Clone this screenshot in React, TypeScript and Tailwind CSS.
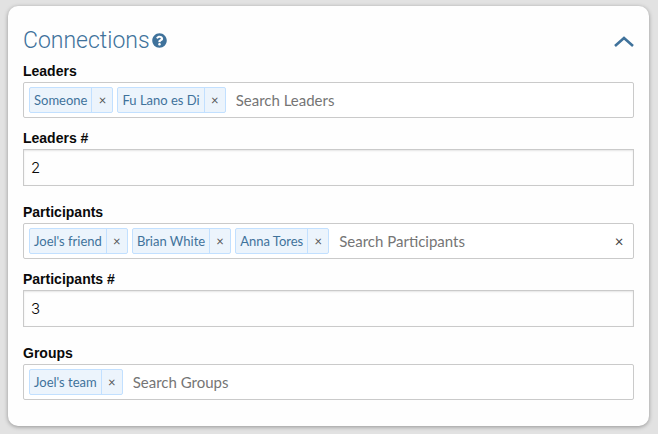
import { useState } from "react";

type TagFieldProps = {
  id: string;
  label: string;
  placeholder: string;
  initial: string[];
  clearable?: boolean;
};

const labelClass =
  "block font-['Liberation_Sans',Arial,sans-serif] text-sm leading-[22px] font-bold text-[#0a0a0a]";

function TagField({ id, label, placeholder, initial, clearable }: TagFieldProps) {
  const [tags, setTags] = useState(initial);
  return (
    <div>
      <label htmlFor={id} className={labelClass}>
        {label}
      </label>
      <div className="flex min-h-9 items-center gap-1 rounded-xs border border-[#cacaca] bg-white py-1 pr-2 pl-[5px]">
        {tags.map((tag) => (
          <span
            key={tag}
            className="flex h-[26px] shrink-0 items-stretch rounded-xs border border-[#c2e0ff] bg-[#ecf4fc] text-[#3f729b]"
          >
            <span className="border-r border-[#c2e0ff] px-1 text-[13px] leading-6">{tag}</span>
            <button
              type="button"
              aria-label={`Remove ${tag}`}
              onClick={() => setTags(tags.filter((t) => t !== tag))}
              className="w-5 text-center text-[13px] leading-[22px] text-[#555555]"
            >
              ×
            </button>
          </span>
        ))}
        <input
          id={id}
          type="text"
          placeholder={placeholder}
          className="min-w-0 flex-1 bg-transparent pl-1.5 text-[15px] leading-6 text-[#333333] outline-none placeholder:text-[#757575]"
        />
        {clearable && (
          <button
            type="button"
            aria-label={`Clear ${label}`}
            onClick={() => setTags([])}
            className="w-3 text-center text-[15px] leading-6 text-[#444444]"
          >
            ×
          </button>
        )}
      </div>
    </div>
  );
}

function NumberField({ id, label, value }: { id: string; label: string; value: string }) {
  return (
    <div className="mt-[9px] mb-[15px]">
      <label htmlFor={id} className={labelClass}>
        {label}
      </label>
      <input
        id={id}
        type="text"
        inputMode="numeric"
        defaultValue={value}
        className="block h-[37px] w-full border border-[#cacaca] bg-[#fefefe] px-[7px] font-['Inter','Liberation_Sans',sans-serif] text-[15px] font-light text-[#0a0a0a] shadow-[inset_0_1px_2px_rgba(10,10,10,0.1)] outline-none"
      />
    </div>
  );
}

export default function App() {
  return (
    <div className="min-h-screen bg-[#e2e2e2] pt-1.5 pr-[9px] pb-2 pl-2 font-['Lato',sans-serif]">
      <section className="rounded-[10px] bg-[#fefefe] px-[15px] pt-4 pb-[26px] shadow-[0_1px_4px_rgba(0,0,0,0.35)]">
        <header className="flex h-[38px] items-center justify-between">
          <h2 className="flex items-center gap-0.5 font-['Roboto','Liberation_Sans',sans-serif] text-[23px] leading-8 font-light text-[#3f729b]">
            Connections
            <button type="button" aria-label="Help" className="pb-0.5">
              <svg viewBox="0 0 512 512" className="size-[15px]" fill="currentColor" aria-hidden="true">
                <path d="M504 256c0 137-111 248-248 248S8 393 8 256 119 8 256 8s248 111 248 248zM262.700 90c-54.500 0-89.300 23-116.500 63.800-3.500 5.300-2.400 12.400 2.700 16.300l34.700 26.300c5.200 3.900 12.600 3 16.700-2.100 17.900-22.700 30.100-35.800 57.300-35.800 20.400 0 45.700 13.100 45.700 33 0 15-12.400 22.700-32.500 34C247.100 238.500 216 254.900 216 296v4c0 6.600 5.400 12 12 12h56c6.600 0 12-5.400 12-12v-1.300c0-28.500 83.200-29.600 83.200-106.700 0-58-60.200-102-116.500-102zM256 338c-25.400 0-46 20.600-46 46 0 25.400 20.600 46 46 46s46-20.600 46-46c0-25.400-20.600-46-46-46z" />
              </svg>
            </button>
          </h2>
          <button type="button" aria-label="Collapse Connections" className="text-[#3f729b]">
            <svg viewBox="0 0 20 12" className="h-3 w-5" fill="none" stroke="currentColor" strokeWidth="2.600" aria-hidden="true">
              <path d="M1 11 10 3 19 11" />
            </svg>
          </button>
        </header>
        <TagField id="leaders" label="Leaders" placeholder="Search Leaders" initial={["Someone", "Fu Lano es Di"]} />
        <NumberField id="leaders-count" label="Leaders #" value="2" />
        <TagField
          id="participants"
          label="Participants"
          placeholder="Search Participants"
          initial={["Joel's friend", "Brian White", "Anna Tores"]}
          clearable
        />
        <NumberField id="participants-count" label="Participants #" value="3" />
        <TagField id="groups" label="Groups" placeholder="Search Groups" initial={["Joel's team"]} />
      </section>
    </div>
  );
}
